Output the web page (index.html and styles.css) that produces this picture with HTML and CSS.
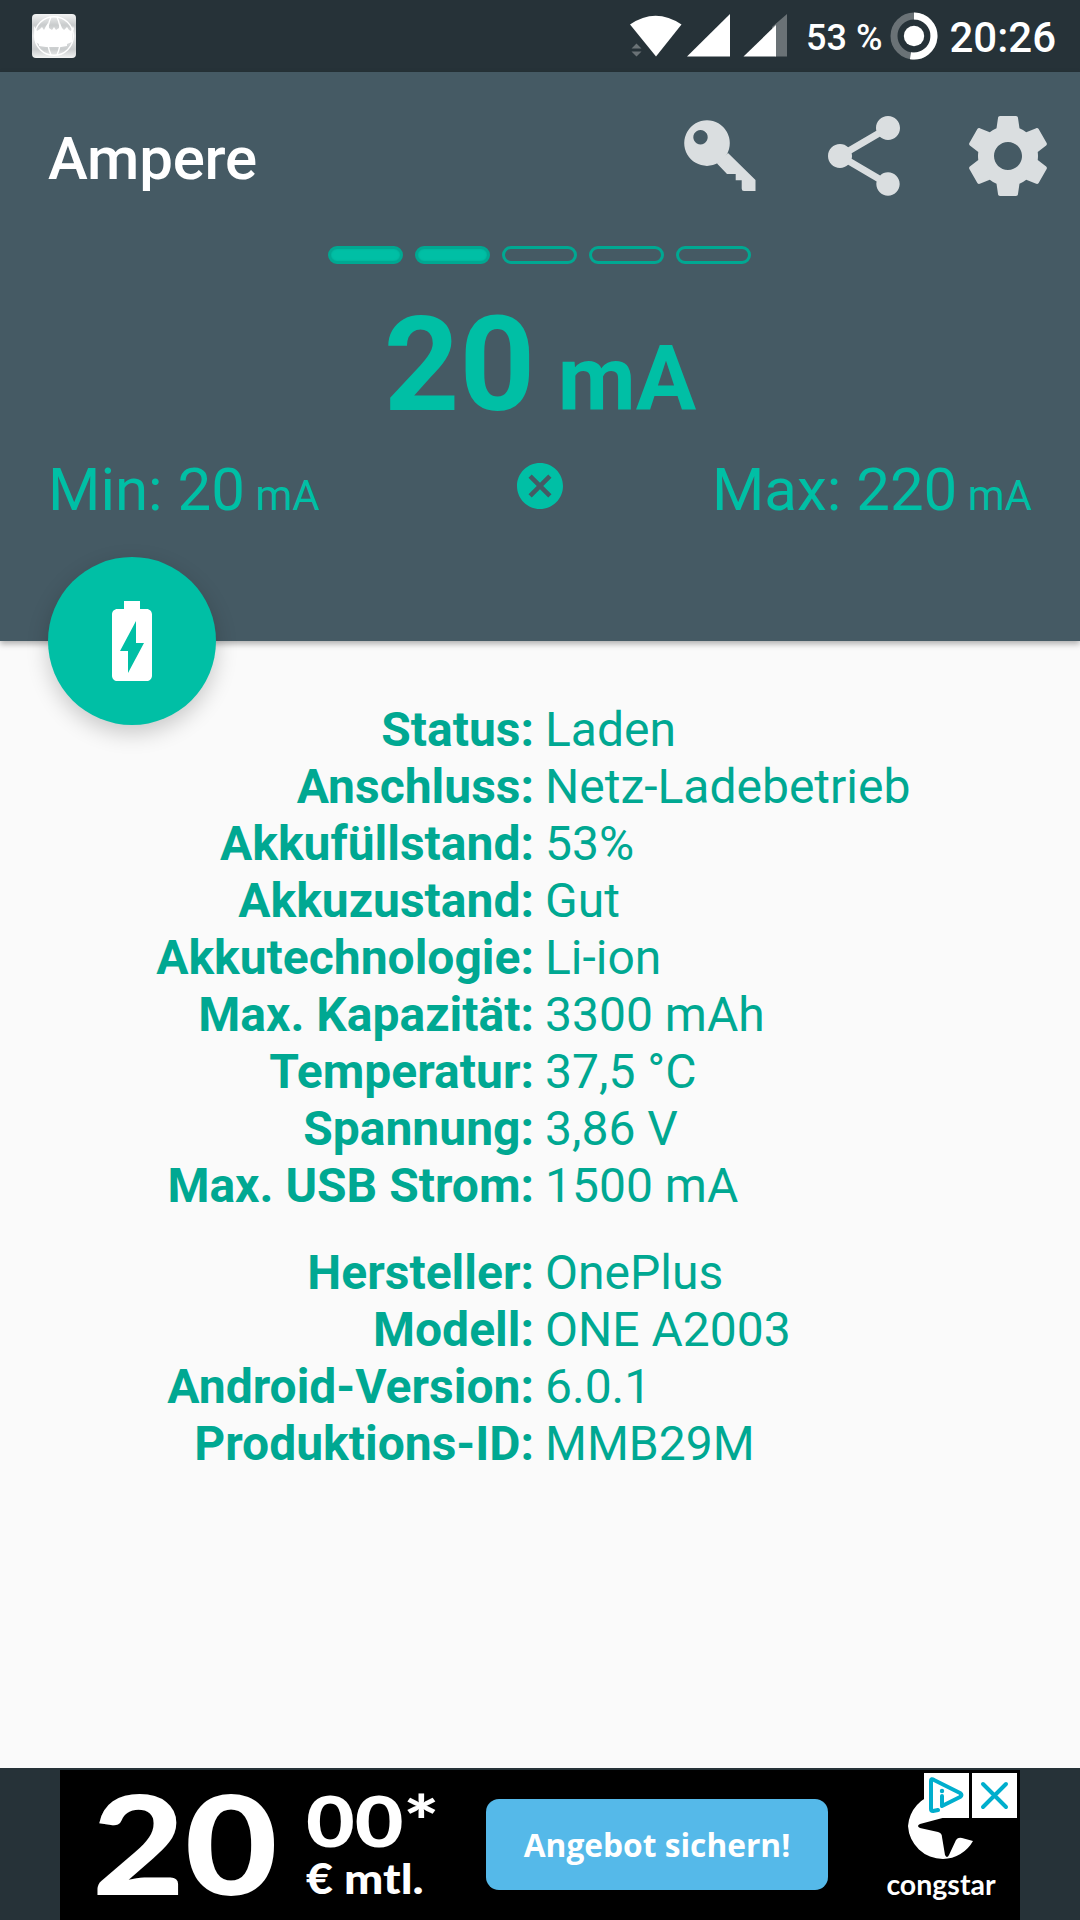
FILE: index.html
```html
<!DOCTYPE html>
<html lang="de">
<head>
  <meta charset="UTF-8" />
  <meta name="viewport" content="width=device-width, initial-scale=1.0"/>
  <title>Ampere</title>
  <link rel="stylesheet" href="styles.css">
</head>
<body>
  <div class="statusbar">
    <svg class="notification" width="44" height="44" viewBox="0 0 44 44">
      <defs>
        <linearGradient id="plate" x1="0" y1="0" x2="0" y2="1">
          <stop offset="0" stop-color="#f2f3f3"/>
          <stop offset="0.25" stop-color="#c9cccd"/>
          <stop offset="0.5" stop-color="#e6e7e8"/>
          <stop offset="0.8" stop-color="#c9cccd"/>
          <stop offset="1" stop-color="#f2f3f3"/>
        </linearGradient>
      </defs>
      <rect width="44" height="44" rx="4" fill="url(#plate)"/>
      <g fill="none" stroke="#fff" stroke-width="1.4">
        <circle cx="22" cy="22" r="19.3"/>
        <path d="M19 3C14 14 14 30 19 41M25 3C30 14 30 30 25 41"/>
      </g>
      <path d="M2 12l3 5 3-2 2-2 2 3 2-4 2-3 1 5 3 2 2-3 2 3 3-2 1-5 2 5 2 2 3-3 2 3 2 1 2-5 1 3-2 5v8l-5 2v2l-6 1H14l-7-1v-2l-4-2z" fill="#fff"/>
    </svg>

    <div class="indicators">
      <svg width="160" height="44" viewBox="0 0 160 44" fill="#fff">
        <path d="M2 10.5Q27.500-7 53.500 10.500L28 42.500z"/>
        <path d="M59 42.500L102 0v42.500z"/>
        <path d="M144 13L159 0v42.500H147z" fill="#6a7276"/>
        <path d="M115.500 42.500L148 11v31.500z"/>
        <path d="M3.500 34.500l5-5 5 5zM3.500 37.500h10l-5 5z" fill="#6a7276"/>
      </svg>
      <span class="percent">53 %</span>
      <svg class="ring" width="48" height="48" viewBox="0 0 48 48" fill="none" stroke-width="7">
        <circle cx="24" cy="24" r="20" stroke="#6a7276"/>
        <path d="M24 4a20 20 0 1 1-3.500 39.700" stroke="#fff"/>
        <circle cx="24" cy="24" r="10.200" fill="#fff"/>
      </svg>
      <span class="clock">20:26</span>
    </div>
  </div>

  <header class="header">
    <div class="toolbar">
      <h1>Ampere</h1>
      <div class="actions">
        <svg class="key" width="72" height="72" viewBox="0 0 72 72">
          <path fill-rule="evenodd" d="M23 0.300a22.800 22.800 0 1 0 .01 0zM16.500 10a7.200 7.200 0 1 0 .01 0z"/>
          <path d="M44 33L71.500 60V71H60Q57.700 71 57.700 68.500V60.300H51.700V54H43L33 43.500z"/>
        </svg>
        <svg width="72" height="80" viewBox="3 2 18 20">
          <path d="M18 16.080c-.76 0-1.440.3-1.960.77L8.910 12.700c.05-.23.09-.46.09-.7s-.04-.47-.09-.7l7.050-4.110c.54.5 1.250.81 2.040.81 1.660 0 3-1.340 3-3s-1.340-3-3-3-3 1.340-3 3c0 .24.04.47.09.7L8.040 9.810C7.500 9.310 6.790 9 6 9c-1.660 0-3 1.340-3 3s1.340 3 3 3c.79 0 1.500-.31 2.040-.81l7.120 4.160c-.05.21-.08.43-.08.65 0 1.610 1.310 2.920 2.920 2.920s2.920-1.310 2.920-2.920-1.310-2.920-2.920-2.920z"/>
        </svg>
        <svg width="80" height="80" viewBox="2 2 20 20">
          <path d="M19.430 12.980c.04-.32.07-.64.07-.98s-.03-.66-.07-.98l2.110-1.650c.19-.15.24-.42.12-.64l-2-3.460c-.12-.22-.39-.3-.61-.22l-2.490 1c-.52-.4-1.080-.73-1.690-.98l-.38-2.650C14.460 2.180 14.250 2 14 2h-4c-.25 0-.46.18-.49.42l-.38 2.650c-.61.25-1.170.59-1.690.98l-2.490-1c-.23-.09-.49 0-.61.22l-2 3.460c-.13.22-.07.49.12.64l2.110 1.650c-.04.32-.07.65-.07.98s.03.66.07.98l-2.110 1.650c-.19.15-.24.42-.12.64l2 3.460c.12.22.39.3.61.22l2.490-1c.52.4 1.080.73 1.690.98l.38 2.650c.03.24.24.42.49.42h4c.25 0 .46-.18.49-.42l.38-2.650c.61-.25 1.170-.59 1.690-.98l2.490 1c.23.09.49 0 .61-.22l2-3.460c.12-.22.07-.49-.12-.64l-2.110-1.650zM12 15.500c-1.930 0-3.500-1.570-3.500-3.500s1.570-3.500 3.500-3.500 3.500 1.570 3.500 3.500-1.570 3.500-3.500 3.500z"/>
        </svg>
      </div>
    </div>

    <div class="level">
      <span class="bar full"></span>
      <span class="bar full"></span>
      <span class="bar"></span>
      <span class="bar"></span>
      <span class="bar"></span>
    </div>

    <div class="current">20<small> mA</small></div>

    <div class="range">
      <span class="min">Min: 20<small> mA</small></span>
      <svg class="reset" width="46" height="46" viewBox="2 2 20 20">
        <path d="M12 2C6.470 2 2 6.470 2 12s4.470 10 10 10 10-4.470 10-10S17.530 2 12 2zm5 13.590L15.590 17 12 13.410 8.410 17 7 15.590 10.590 12 7 8.410 8.410 7 12 10.590 15.590 7 17 8.410 13.410 12 17 15.590z"/>
      </svg>
      <span class="max">Max: 220<small> mA</small></span>
    </div>

    <div class="fab">
      <svg width="40" height="80" viewBox="7 2 10 20">
        <path d="M15.670 4H14V2h-4v2H8.330C7.600 4 7 4.600 7 5.330v15.330C7 21.400 7.600 22 8.330 22h7.330c.74 0 1.340-.6 1.340-1.330V5.330C17 4.600 16.400 4 15.670 4zM11 20v-5.500H9L13 7v5.500h2L11 20z"/>
      </svg>
    </div>
  </header>

  <main>
    <dl class="info">
      <dt>Status:</dt><dd>Laden</dd>
      <dt>Anschluss:</dt><dd>Netz-Ladebetrieb</dd>
      <dt>Akkufüllstand:</dt><dd>53%</dd>
      <dt>Akkuzustand:</dt><dd>Gut</dd>
      <dt>Akkutechnologie:</dt><dd>Li-ion</dd>
      <dt>Max. Kapazität:</dt><dd>3300 mAh</dd>
      <dt>Temperatur:</dt><dd>37,5 °C</dd>
      <dt>Spannung:</dt><dd>3,86 V</dd>
      <dt>Max. USB Strom:</dt><dd>1500 mA</dd>
    </dl>
    <dl class="info">
      <dt>Hersteller:</dt><dd>OnePlus</dd>
      <dt>Modell:</dt><dd>ONE A2003</dd>
      <dt>Android-Version:</dt><dd>6.0.1</dd>
      <dt>Produktions-ID:</dt><dd>MMB29M</dd>
    </dl>
  </main>

  <footer>
    <div class="ad">
      <span class="euro">20</span>
      <div class="price">
        <span class="cents">00*</span>
        <span class="monthly">€ mtl.</span>
      </div>
      <button class="offer">Angebot sichern!</button>
      <div class="brand">
        <svg width="66" height="72" viewBox="0 0 66 72">
          <path d="M29 5Q34 3 52 8L42 27L12 35Q8 37 12 39L30 43Q34 44 34 48L37 66Q39 70 41 66L48 51Q50 48 54 49L65 52A35 35 0 0 1 35 70A35 35 0 0 1 0 37A35 35 0 0 1 29 5z" fill="#fff"/>
        </svg>
        <span class="brand-name">congstar</span>
      </div>
      <div class="ad-choices">
        <svg width="45" height="45" viewBox="0 0 45 45">
          <path d="M14 37L9 38Q7 38 7 36V8Q7 5 10 7L36 20Q39 22 36 24L18 33V23" fill="none" stroke="#00aecd" stroke-width="4" stroke-linejoin="round" stroke-linecap="round"/>
          <circle cx="18" cy="18" r="2.200" fill="#00aecd"/>
        </svg>
        <svg width="45" height="45" viewBox="0 0 45 45">
          <path d="M11 11L34 34M34 11L11 34" stroke="#00aecd" stroke-width="4" stroke-linecap="round"/>
        </svg>
      </div>
    </div>
  </footer>
</body>
</html>
```
FILE: styles.css
```css
:root {
  --dark: #263238;
  --header-bg: #455a64;
  --accent: #00bfa5;
  --text-color: #00a892;
  --icon-color: #dadee0;
}

* {
  box-sizing: border-box;
}

body {
  display: flex;
  flex-direction: column;
  height: 1920px;
  margin: 0;
  background: #fafafa;
  font-family: Roboto, sans-serif;
  overflow: hidden;
}

svg {
  display: block;
  flex: none;
}

/* status bar */
.statusbar {
  display: flex;
  justify-content: space-between;
  height: 72px;
  padding: 14px 24px 0 32px;
  background: var(--dark);
  color: #fff;
}

.indicators {
  display: flex;
  align-items: flex-start;
  font-weight: 500;
  white-space: nowrap;
}

.percent {
  margin: 2px 0 0 18px;
  font-size: 36px;
  line-height: 44px;
}

.ring {
  margin: -2px 0 0 8px;
}

.clock {
  margin-left: 11px;
  font-size: 42px;
  line-height: 47px;
}

/* header */
.header {
  position: relative;
  height: 569px;
  background: var(--header-bg);
  color: var(--accent);
  box-shadow: 0 3px 6px rgba(0,0,0,0.3);
}

.toolbar {
  display: flex;
  justify-content: space-between;
  align-items: center;
  height: 168px;
  padding: 0 32px 0 48px;
}

.toolbar h1 {
  margin: 4px 0 0;
  color: #fff;
  font-size: 60px;
  font-weight: 500;
  letter-spacing: -0.2px;
}

.actions {
  display: flex;
  align-items: center;
  gap: 68px;
  fill: var(--icon-color);
}

.key {
  margin-right: 4px;
}

.level {
  display: flex;
  justify-content: center;
  gap: 12px;
  margin-top: 6px;
  padding-right: 1px;
}

.bar {
  width: 75px;
  height: 18px;
  border: 3px solid #00a892;
  border-radius: 9px;
}

.bar.full {
  background: var(--accent);
  box-shadow: inset 0 0 2px #00a892;
}

.current {
  margin-top: 23px;
  text-align: center;
  font-size: 132px;
  line-height: 156px;
  font-weight: 700;
}

.current small {
  font-size: 90px;
}

.range {
  display: grid;
  grid-template-columns: 1fr 46px 1fr;
  margin-top: -4px;
  padding: 0 48px;
  font-size: 60px;
  line-height: 72px;
}

.range small {
  font-size: 42px;
}

.reset {
  fill: var(--accent);
  margin-top: 9px;
}

.max {
  text-align: right;
}

/* sits on the lower edge of the header */
.fab {
  position: absolute;
  left: 48px;
  bottom: -84px;
  display: flex;
  align-items: center;
  justify-content: center;
  width: 168px;
  height: 168px;
  border-radius: 50%;
  background: var(--accent);
  fill: #fff;
  box-shadow: 0 8px 22px rgba(0,0,0,0.2);
}

/* battery and device info */
main {
  flex: 1;
  padding-top: 60px;
}

.info {
  display: grid;
  grid-template-columns: 534px 1fr;
  column-gap: 11px;
  margin: 0 0 30px;
  color: var(--text-color);
  font-size: 48px;
  line-height: 57px;
}

.info dt {
  text-align: right;
  font-weight: 700;
}

.info dd {
  margin: 0;
}

/* banner */
footer {
  height: 152px;
  padding: 2px 60px 0;
  background: var(--dark);
}

.ad {
  position: relative;
  display: flex;
  height: 150px;
  padding-left: 32px;
  background: #000;
  color: #fff;
  font-family: Lato, sans-serif;
  font-weight: 700;
  white-space: nowrap;
}

.euro {
  width: 184px;
  font-weight: 900;
  font-size: 138px;
  line-height: 144px;
  transform: scaleX(1.16);
  transform-origin: left;
}

.price {
  display: flex;
  flex-direction: column;
  align-items: flex-start;
  width: 149px;
  margin-left: 30px;
  padding-top: 18px;
}

.cents {
  font-size: 70px;
  font-weight: 900;
  line-height: 64px;
  transform: scaleX(1.2);
  transform-origin: left;
}

.monthly {
  margin-top: 2px;
  font-size: 42px;
  font-weight: 900;
  line-height: 48px;
  transform: scaleX(1.11);
  transform-origin: left;
}

.offer {
  width: 342px;
  height: 91px;
  margin: 29px 0 0 31px;
  padding: 0;
  border: none;
  border-radius: 13px;
  background: #55b9e9;
  color: #fff;
  font-family: "Open Sans", sans-serif;
  font-size: 31.7px;
  font-weight: 700;
}

.brand {
  display: flex;
  flex-direction: column;
  align-items: center;
  width: 112px;
  margin: 19px 0 0 57px;
}

.brand-name {
  margin-top: 4px;
  font-size: 28.5px;
  line-height: 38px;
}

.ad-choices {
  position: absolute;
  top: 3px;
  right: 3px;
  display: flex;
  gap: 3px;
}

.ad-choices svg {
  background: #fff;
}
```
